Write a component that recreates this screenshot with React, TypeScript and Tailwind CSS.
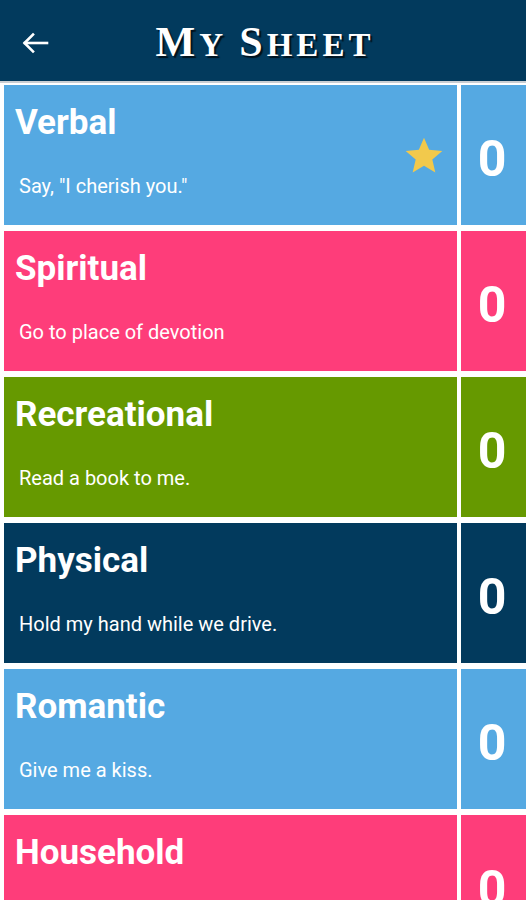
import React from "react";

type Item = { title: string; sub: string; bg: string; star?: boolean };

const items: Item[] = [
  { title: "Verbal", sub: 'Say, "I cherish you."', bg: "bg-[#55a9e2]", star: true },
  { title: "Spiritual", sub: "Go to place of devotion", bg: "bg-[#fe3d7a]" },
  { title: "Recreational", sub: "Read a book to me.", bg: "bg-[#669900]" },
  { title: "Physical", sub: "Hold my hand while we drive.", bg: "bg-[#023a5d]" },
  { title: "Romantic", sub: "Give me a kiss.", bg: "bg-[#55a9e2]" },
  { title: "Household", sub: "", bg: "bg-[#fe3d7a]" },
];

function Star() {
  return (
    <svg width="44" height="44" viewBox="0 0 24 24" className="shrink-0">
      <path
        fill="#f2c94c"
        d="M12 17.27L18.18 21l-1.64-7.03L22 9.24l-7.19-.61L12 2 9.19 8.63 2 9.24l5.46 4.73L5.82 21z"
      />
    </svg>
  );
}

function Row({ item }: { item: Item }) {
  return (
    <div className="flex h-[140px] gap-[4px] pl-[4px]">
      <div className={`relative flex flex-1 flex-col ${item.bg}`}>
        <div className="pl-[11px] pt-[20px] text-[35px] font-bold leading-[35px] text-white">
          {item.title}
        </div>
        {item.sub && (
          <div className="mt-[36px] pl-[15px] text-[20px] leading-[20px] text-white">
            {item.sub}
          </div>
        )}
        {item.star && (
          <div className="absolute right-[11px] top-[49px]">
            <Star />
          </div>
        )}
      </div>
      <div
        className={`flex w-[65px] items-center justify-center pt-[7px] pr-[3px] text-[50px] font-bold leading-none text-white ${item.bg}`}
      >
        0
      </div>
    </div>
  );
}

export default function App() {
  return (
    <div className="min-h-[900px] w-[526px] bg-white [font-family:Roboto,'Noto_Sans',sans-serif]">
      <div className="relative flex h-[81px] items-center justify-center bg-[#023a5d]">
        <svg
          className="absolute left-[22px] top-[32px]"
          width="27"
          height="22"
          viewBox="0 0 27 22"
          fill="none"
          stroke="white"
          strokeWidth="2.6"
          strokeLinecap="square"
        >
          <path d="M3 11H25" />
          <path d="M11 2.5L2.5 11L11 19.5" />
        </svg>
        <div className="flex items-baseline pl-[4px] pt-[2px] font-bold text-white tracking-[4px] [font-family:'Liberation_Serif',serif] [text-shadow:2px_2px_1px_rgba(0,0,0,0.7)]">
          <span className="text-[42px] leading-none">M</span>
          <span className="text-[33px] leading-none">Y</span>
          <span className="text-[33px] leading-none">&nbsp;</span>
          <span className="text-[42px] leading-none">S</span>
          <span className="text-[33px] leading-none">HEET</span>
        </div>
      </div>
      <div className="h-[2px] bg-[#c9ced3]" />
      <div className="h-[2px] bg-white" />
      <div className="flex flex-col gap-[6px]">
        {items.map((it) => (
          <Row key={it.title} item={it} />
        ))}
      </div>
    </div>
  );
}
